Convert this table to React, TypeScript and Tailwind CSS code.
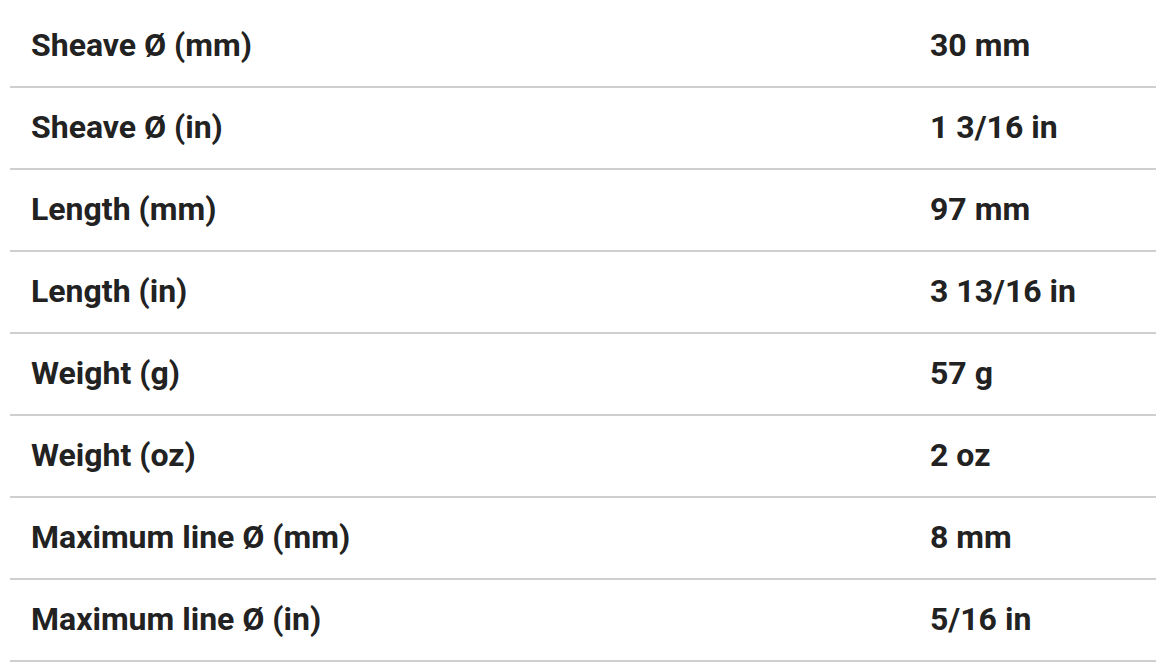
import { type FC } from "react";

const SPECS: [string, string][] = [
  ["Sheave Ø (mm)", "30 mm"],
  ["Sheave Ø (in)", "1 3/16 in"],
  ["Length (mm)", "97 mm"],
  ["Length (in)", "3 13/16 in"],
  ["Weight (g)", "57 g"],
  ["Weight (oz)", "2 oz"],
  ["Maximum line Ø (mm)", "8 mm"],
  ["Maximum line Ø (in)", "5/16 in"],
];

const App: FC = () => {
  return (
    <div className="bg-white min-h-screen pt-[6px] pl-[10px] font-['Roboto',sans-serif]">
      <div className="flex flex-col">
        {SPECS.map(([label, value]) => (
          <div
            key={label}
            className="flex items-center h-[82px] pb-[2px] border-b-2 border-[#cfcfcf] text-[32px] leading-none font-bold text-[#222222]"
          >
            <div className="w-[900px] pl-[21px]">{label}</div>
            <div className="pl-[20px]">{value}</div>
          </div>
        ))}
      </div>
    </div>
  );
};

export default App;
